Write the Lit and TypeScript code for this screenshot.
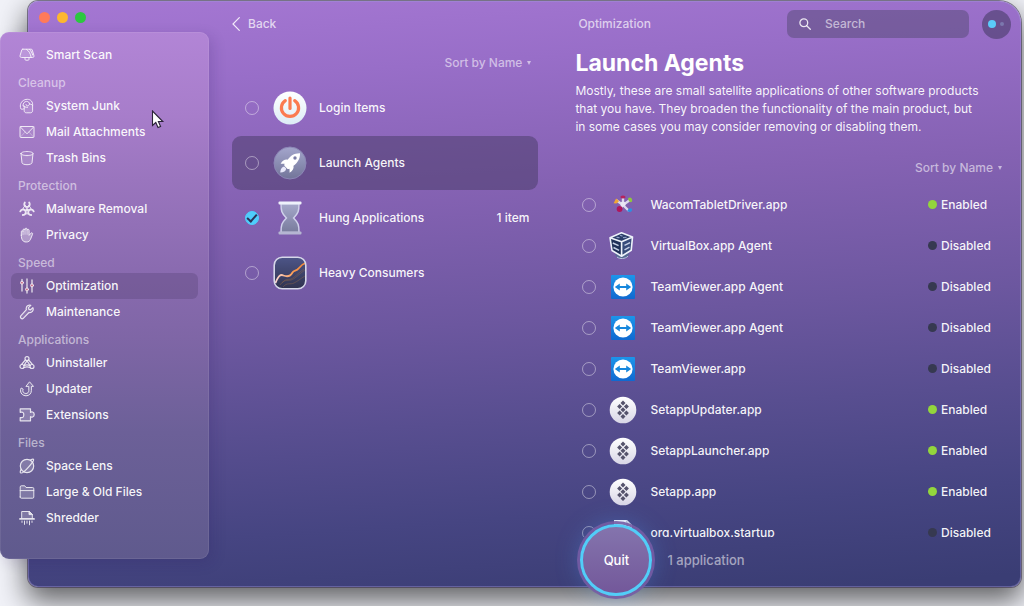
import { LitElement, html, svg, css, nothing, TemplateResult } from "lit";
import { customElement, property, state } from "lit/decorators.js";
import { classMap } from "lit/directives/class-map.js";

type Glyph = TemplateResult;

/* Line glyphs of the navigation, all on a 16x16 grid. */
const navGlyphs: Record<string, Glyph> = {
  scan: svg`<path fill="rgba(255,255,255,.18)" d="M3.800 2.200h8.400c.5 0 .8.2 1 .6l1.700 5.600c.3 1.300-.2 2.100-1.300 2.100H2.400C1.300 10.500.8 9.700 1.100 8.400l1.700-5.600c.2-.4.500-.6 1-.6z"/><path d="M6 10.600v1.700c0 .6.300.9.900.9h2.200c.6 0 .9-.3.900-.9v-1.700M7.500 2.400c2.200 1.400 3.900 3.600 4.600 7.800M10.500 2.400c1.600 1.600 2.600 3.400 3.200 5.600"/>`,
  junk: svg`<path fill="rgba(255,255,255,.14)" d="M5.200 8v4.700c0 1.300.9 2.100 2.200 2.100h4c1.300 0 2.200-.8 2.200-2.100V7.200"/><path d="M13.600 7.400C14.200 4 11.800 1.300 8.400 1.300 4.400 1.300 1.300 4.300 1.300 8c0 1.200.3 2.100.6 2.900.9.600 2.200.4 3.200-.3M4.100 7.800c-.3-2.500 1.300-4.400 3.500-4.400 1.700 0 2.800 1.100 2.800 2.500 0 1.100-.8 1.900-1.900 1.900-.9 0-1.500-.6-1.500-1.300M10.400 5.900c1 .1 2.300.5 3.200 1.400M4.100 7.800c1 1 2.600 1.600 4.400 1.600"/>`,
  mail: svg`<rect x="1" y="2.500" width="14" height="11" rx="1" fill="rgba(255,255,255,.1)"/><path d="M1.400 3l6.600 6.800L14.600 3"/><path d="M1.500 13l4.600-5M14.500 13L9.900 8" opacity=".4"/>`,
  trash: svg`<path fill="rgba(255,255,255,.14)" d="M2 3.600l1 9.200c.1 1 2.200 1.900 5 1.900s4.900-.9 5-1.900l1-9.200"/><path d="M2 3.500c0-1.200 2.600-1.900 6-1.900s6 .7 6 1.900S11.400 5.600 8 5.600 2 4.700 2 3.500z"/>`,
  biohazard: svg`<g stroke-width="1.900"><path d="M5.800 1.600C4.500 3.700 5.700 6 8 6s3.500-2.300 2.200-4.400M1.300 10.300C2.400 8 5.300 7.900 6.500 9.900c1 2-.3 4.100-2.700 4.100M14.700 10.300C13.600 8 10.700 7.900 9.500 9.900c-1 2 .3 4.100 2.700 4.100"/></g><circle cx="8" cy="8.700" r="1.100" fill="currentColor"/><path d="M4.100 7.600c.3-1.400 1.200-2.500 2.400-3.100M11.900 7.600c-.3-1.400-1.200-2.500-2.400-3.100M6.200 12.500c1.200.6 2.400.6 3.600 0"/>`,
  hand: svg`<path fill="rgba(255,255,255,.34)" d="M2.300 8.200V4.700c0-1.300 1.500-1.300 1.700-.2V3c.1-1.400 1.800-1.400 2 0v-.8c.1-1.400 2-1.400 2.100 0v1c.2-1.300 2-1.200 2 .2v5l1.700-2.100c.8-1 2.300-.3 1.700 1l-2 5c-.7 1.800-2 2.700-4.300 2.700-3.300 0-4.900-2.300-4.900-6.800z"/><path d="M4 4.500v3.200M6 3v4.300M8.100 3.200v4.200" stroke-width=".7"/>`,
  sliders: svg`<g stroke-width="1.300"><path d="M3 1.500v1.700M3 6.200V13M8 1v9M8 12.800V15M13 2v4M13 8.800V14"/></g><g fill="#df7184"><circle cx="3" cy="4.700" r="1.500"/><circle cx="8" cy="11.400" r="1.500"/><circle cx="13" cy="7.400" r="1.500"/></g>`,
  wrench: svg`<path fill="rgba(255,255,255,.12)" stroke-width="1.200" d="M13.900 3.600l-2.300 2.200-1.700-.4-.4-1.800 2.300-2.200C9.700.7 7.700 1.800 7.300 3.700c-.2.700-.1 1.400.1 2L2 11.700c-1.600 1.800.8 4.100 2.500 2.400l5.500-5.600c2.700.7 5-1.900 3.900-4.900z"/>`,
  uninstall: svg`<g stroke-width="1.200"><circle cx="8" cy="3.600" r="2"/><circle cx="3" cy="11.500" r="2"/><circle cx="13" cy="11.500" r="2"/><path d="M6.300 5L2.600 9.300M9.700 5l3.700 4.300M8 5.800L4.800 10.500M8 5.800l3.200 4.700M5 10.600c2-.9 4-.9 6 0M4.700 12.800c2.200-1.100 4.400-1.100 6.600 0"/></g>`,
  update: svg`<path fill="rgba(255,255,255,.12)" d="M10.800 1.100l3.700 4.300h-2.100v4.200c0 3.100-2.300 5.200-5.400 5.200-3 0-5.300-2.100-5.500-4.900-.1-1.100.2-2 .7-2.900l2 1.200c-.3.500-.4 1-.4 1.500.1 1.600 1.400 2.800 3.100 2.800 1.800 0 2.900-1.200 2.900-3V5.400H7.300z"/>`,
  extension: svg`<path fill="rgba(255,255,255,.22)" stroke-width="1.200" d="M1.200 1.800h10.300v3.600c.8-1 3.700-.8 3.700 2.100s-2.900 3.100-3.700 2.100v4.200H1.200V10.500c3 .8 3.600-.9 3.600-2.700S4.200 4.500 1.200 5.300z"/>`,
  lens: svg`<circle cx="8" cy="8" r="6.700" fill="rgba(255,255,255,.2)" stroke-width="1.200"/><path stroke-width="1.200" d="M2.200 11.400c-1 1.700-1.200 2.900-.6 3.400 1.100.8 4.600-1.900 7.900-5.700s5.900-7 4.900-7.800c-.5-.4-1.600 0-2.900.8"/>`,
  folder: svg`<path fill="rgba(255,255,255,.2)" d="M1.200 13V3c0-.7.4-1.200 1.100-1.200h3.500l1.200 1.700h6.700c.7 0 1.100.5 1.100 1.200V13c0 .7-.4 1.200-1.100 1.200H2.300c-.7 0-1.100-.5-1.100-1.200z"/><path d="M1.200 6.600h13.600"/>`,
  shredder: svg`<path fill="rgba(255,255,255,.2)" d="M2.700 8.500V1.500h7.500l3.100 2.900v4.100"/><path d="M10 1.600v3h3.200z" fill="currentColor"/><path d="M1 8.900h14" stroke-width="1.800"/><path d="M3 11v1.400M5.500 11v3.400M8 11v2.200M10.500 11v3.800M13 11v1.400"/>`,
};

/* Pictures of the optimization categories, on a 34x34 grid. */
const categoryArt: Record<string, Glyph> = {
  login: svg`<defs><linearGradient id="lg" x2="0" y2="1"><stop stop-color="#fff"/><stop offset="1" stop-color="#dcecf6"/></linearGradient></defs><circle cx="17" cy="17" r="16.500" fill="url(#lg)"/><path d="M12.300 9.600a8.600 8.600 0 1 0 9.400 0" fill="none" stroke="#fb7b50" stroke-width="3.200" stroke-linecap="round"/><path d="M17 7v10.500" stroke="#fb7b50" stroke-width="3.200" stroke-linecap="round"/>`,
  agents: svg`<defs><linearGradient id="ag" x2="0" y2="1"><stop stop-color="#a4a6cc"/><stop offset="1" stop-color="#727599"/></linearGradient></defs><circle cx="17" cy="17" r="16" fill="url(#ag)" stroke="#8c86b6"/><path fill="#fff" d="M27 7.200c-5.700-.2-9.700 2.600-12.400 6.500-2.700-.5-4.900.8-7 4l4 .1c-.3.800-.4 1.400-.2 1.900l3.200 3.200c.6.200 1.200.1 1.900-.2l.1 4c3.200-2 4.400-4.200 3.900-7 3.900-2.800 6.700-6.800 6.500-12.500z"/><circle cx="22" cy="12" r="1.700" fill="#7b7ca6"/><path fill="#e8e8fa" d="M11.500 20.800c-2.700-.2-4 2.300-4.200 5.700 3.300-.1 5.700-1.300 5.900-4z"/>`,
  hourglass: svg`<defs><linearGradient id="hg" x2="0" y2="1"><stop stop-color="#a6a8cb"/><stop offset="1" stop-color="#787b9c"/></linearGradient></defs><path d="M8 2.500h18c0 7.500-.6 9.500-5.400 14.500 4.800 5 5.400 7 5.400 14.500H8c0-7.500.6-9.500 5.400-14.500C8.600 12 8 10 8 2.500z" fill="url(#hg)" stroke="#cfd1ea" stroke-width="1.500"/><rect x="5.500" y=".5" width="23" height="3" rx="1" fill="#eef1fb"/><rect x="5.500" y="30.500" width="23" height="3" rx="1" fill="#b5b6d2"/>`,
  heavy: svg`<defs><linearGradient id="hv" x2="0" y2="1"><stop stop-color="#4d5588"/><stop offset="1" stop-color="#30334f"/></linearGradient><linearGradient id="hl"><stop stop-color="#fbd6d4"/><stop offset=".6" stop-color="#fb9a50"/><stop offset="1" stop-color="#f68632"/></linearGradient></defs><rect x="1.200" y="1.200" width="31.600" height="31.600" rx="8" fill="url(#hv)"/><path d="M7 29c4-6 7-4 11-5s8-6 14-10M10 31c4-5 7-2 11-4s6-4 11-7M9 27c4-5 6-3 9-4s7-6 13-10" fill="none" stroke="#8a6449" stroke-width=".7" opacity=".7"/><path d="M2.500 27c3-7.500 5-9 8-7.500 4 1.500 7 .8 9-3 1.500-2.500 4-1 6-4 2-2.500 4-4.500 7-5.500" fill="none" stroke="url(#hl)" stroke-width="1.800"/><rect x="1.200" y="1.200" width="31.600" height="31.600" rx="8" fill="none" stroke="#d6d7e9" stroke-width="1.600"/>`,
};

/* Application pictures, on a 28x28 grid. */
const appArt: Record<string, Glyph> = {
  wacom: svg`<path d="M14 14L7 9M14 14V6.500M14 14l7-5M14 14l-4 5M14 14l6 6" stroke="#dcd8ec" stroke-width="2.400"/><circle cx="14" cy="13" r="2.600" fill="#e9e6f4"/><path d="M4.600 12.200l2.500-4.600 3 2.400-2.600 2.600z" fill="#f0a634"/><ellipse cx="14" cy="6" rx="2.600" ry="1.500" fill="#b5235f"/><path d="M19 7.500c2-2 4.500-.6 4.200 2.600-.4 2-3.700 1.200-4.200-2.600z" fill="#8fc63d"/><circle cx="10.600" cy="18" r="2.900" fill="#b0165c"/><path d="M18.200 20c.7-2.500 3.600-3.800 4.800-2 .6 2.400-1.800 4-4.800 2z" fill="#2d8fe0"/>`,
  vbox: svg`<path d="M6 21.500c1 6 12 7.500 14.500 0z" fill="#566a93"/><path d="M8 25c3 2.300 8 2 11-.8" stroke="#b7c4dc" fill="none"/><path d="M1 5.700L12.500.8 23.500 5 12.600 9.800z" fill="#2a3c68"/><path d="M1 5.700l11.600 4.100v14.400L3 18.500z" fill="#1f2f58"/><path d="M23.500 5L12.600 9.800v14.400l9.600-5.900z" fill="#374b7a"/><path d="M1 5.700L12.500.8 23.500 5 12.600 9.800zM1 5.700l2 12.800 9.600 5.700 9.600-5.900L23.500 5M12.600 9.800v14.400" fill="none" stroke="#eef2fa" stroke-width="1.600" stroke-linejoin="round"/><path d="M7.500 5.300l3 .3M14 5.600l3.500-.3M11 3.300l2.500.8" stroke="#8f9fc4" stroke-width="1.200"/><path d="M3.800 11l5.800 2.600M4.500 15.500l5.600 2.800M15.500 13.400l5.600-2.800M15.500 17.800l5-2.600" stroke="#c5cfe4" stroke-width="1.500" fill="none"/>`,
  teamviewer: svg`<defs><linearGradient id="tv" x2="0" y2="1"><stop stop-color="#1c95ea"/><stop offset="1" stop-color="#1069d0"/></linearGradient></defs><rect x="2" y="2" width="24" height="24" rx="1" fill="url(#tv)"/><circle cx="14" cy="14" r="9.600" fill="#fff"/><path fill="#1687dd" d="M5.800 14l5-3.400v2.500h6.400v-2.500l5 3.400-5 3.400v-2.500h-6.400v2.500z"/>`,
  setapp: svg`<defs><linearGradient id="sa" x2="0" y2="1"><stop stop-color="#fff"/><stop offset="1" stop-color="#d8d6e6"/></linearGradient></defs><circle cx="14" cy="14" r="13.300" fill="url(#sa)"/><g fill="#55536c"><path d="M14 4.600l2.500 2.500L14 9.600l-2.500-2.500zM10.600 8l2.500 2.500-2.500 2.500-2.500-2.500zM17.400 8l2.500 2.500-2.500 2.500-2.500-2.500z"/><path d="M14 11.300l2.500 2.500-2.500 2.500-2.500-2.500z"/><path d="M10.600 14.600l2.500 2.500-2.500 2.500-2.500-2.500zM17.400 14.600l2.500 2.500-2.500 2.500-2.500-2.500zM14 18l2.500 2.500L14 23l-2.500-2.500z"/></g>`,
  doc: svg`<path d="M5 1h13l5 5v21H5z" fill="#f1f0f8"/><path d="M17 1l6 6h-6z" fill="#c4c2d8"/>`,
};

const navGroups = [
  { title: "", items: [["scan", "Smart Scan"]] },
  { title: "Cleanup", items: [["junk", "System Junk"], ["mail", "Mail Attachments"], ["trash", "Trash Bins"]] },
  { title: "Protection", items: [["biohazard", "Malware Removal"], ["hand", "Privacy"]] },
  { title: "Speed", items: [["sliders", "Optimization"], ["wrench", "Maintenance"]] },
  { title: "Applications", items: [["uninstall", "Uninstaller"], ["update", "Updater"], ["extension", "Extensions"]] },
  { title: "Files", items: [["lens", "Space Lens"], ["folder", "Large & Old Files"], ["shredder", "Shredder"]] },
];

const categories = [
  { art: "login", name: "Login Items", note: "", checked: false },
  { art: "agents", name: "Launch Agents", note: "", checked: false },
  { art: "hourglass", name: "Hung Applications", note: "1 item", checked: true },
  { art: "heavy", name: "Heavy Consumers", note: "", checked: false },
];

const agents = [
  { art: "wacom", name: "WacomTabletDriver.app", enabled: true },
  { art: "vbox", name: "VirtualBox.app Agent", enabled: false },
  { art: "teamviewer", name: "TeamViewer.app Agent", enabled: false },
  { art: "teamviewer", name: "TeamViewer.app Agent", enabled: false },
  { art: "teamviewer", name: "TeamViewer.app", enabled: false },
  { art: "setapp", name: "SetappUpdater.app", enabled: true },
  { art: "setapp", name: "SetappLauncher.app", enabled: true },
  { art: "setapp", name: "Setapp.app", enabled: true },
  { art: "doc", name: "org.virtualbox.startup", enabled: false },
];

const base = css`
  * { box-sizing: border-box; }
  ul { list-style: none; margin: 0; padding: 0; }
  button, input, select { font: inherit; color: inherit; border: 0; background: none; margin: 0; padding: 0; }
  a { color: inherit; text-decoration: none; }
  svg { display: block; flex: none; }
`;

const checks = css`
  .check {
    appearance: none;
    flex: none;
    width: 14px;
    height: 14px;
    border: 1px solid rgba(255, 255, 255, 0.42);
    border-radius: 50%;
    display: grid;
    place-items: center;
  }
  .check:checked { background: #4fcdfb; border-color: #4fcdfb; }
  .check:checked::after {
    content: "";
    width: 8px;
    height: 4px;
    border: solid #2c3157;
    border-width: 0 0 2px 2px;
    transform: translateY(-1px) rotate(-48deg);
  }
`;

@customElement("sort-menu")
class SortMenu extends LitElement {
  @property() label = "";
  static styles = [base, css`
    :host { display: flex; justify-content: flex-end; }
    .sort { display: flex; align-items: center; gap: 4px; color: rgba(255, 255, 255, 0.56); line-height: 18px; }
    select { appearance: none; outline: none; }
    option { color: #222; }
  `];
  render() {
    return html`<div class="sort">
      <select aria-label=${this.label}><option>Sort by Name</option></select>
      <svg width="4" height="4" viewBox="0 0 4 4" aria-hidden="true"><path d="M0 0h4L2 4z" fill="currentColor"/></svg>
    </div>`;
  }
}

@customElement("nav-panel")
class NavPanel extends LitElement {
  @state() private current = "Optimization";
  static styles = [base, css`
    :host {
      display: flex;
      flex-direction: column;
      gap: 5px;
      padding: 10px 11px 28px;
      border-radius: 9px;
      background: linear-gradient(180deg, #b285d6 0%, #a77dca 16%, #9a75be 28%, #8a6bb0 45%, #7f66a6 58%, #6c6098 76%, #5f5a8d 100%);
      box-shadow: inset 0 0 0 1px rgba(255, 255, 255, 0.08), 4px 4px 14px rgba(40, 20, 90, 0.16);
    }
    .title { margin: 0; padding-left: 7px; font-size: 12px; font-weight: 500; line-height: 20px; color: rgba(255, 255, 255, 0.54); }
    .link { display: flex; align-items: center; gap: 11px; height: 26px; padding-left: 8px; border-radius: 6px; }
    .link.on { background: rgba(80, 60, 110, 0.3); }
    .glyph { fill: none; stroke: currentColor; stroke-width: 1; stroke-linejoin: round; stroke-linecap: round; opacity: 0.88; }
  `];
  render() {
    return navGroups.map((g) => html`<section>
      ${g.title ? html`<h2 class="title">${g.title}</h2>` : nothing}
      <ul>${g.items.map(([icon, name]) => html`<li>
        <a href="#" class=${classMap({ link: true, on: name === this.current })}
          @click=${(e: Event) => { e.preventDefault(); this.current = name; }}>
          <svg class="glyph" width="16" height="16" viewBox="0 0 16 16" aria-hidden="true">${navGlyphs[icon]}</svg>
          <span>${name}</span>
        </a></li>`)}</ul>
    </section>`);
  }
}

@customElement("category-list")
class CategoryList extends LitElement {
  @state() private current = "Launch Agents";
  static styles = [base, checks, css`
    :host { display: block; }
    ul { display: flex; flex-direction: column; gap: 1px; }
    .row { display: flex; align-items: center; height: 54px; padding: 0 9px 0 13px; border-radius: 9px; }
    .row.on { background: rgba(72, 60, 104, 0.52); }
    .pick { display: flex; align-items: center; flex: 1; min-width: 0; }
    .art { margin: 0 12px 0 14px; }
  `];
  render() {
    return html`<ul>${categories.map((c) => html`
      <li class=${classMap({ row: true, on: c.name === this.current })} @click=${() => (this.current = c.name)}>
        <label class="pick">
          <input class="check" type="checkbox" .checked=${c.checked} />
          <svg class="art" width="34" height="34" viewBox="0 0 34 34" aria-hidden="true">${categoryArt[c.art]}</svg>
          <span>${c.name}</span>
        </label>
        ${c.note ? html`<span>${c.note}</span>` : nothing}
      </li>`)}</ul>`;
  }
}

@customElement("agent-list")
class AgentList extends LitElement {
  static styles = [base, checks, css`
    :host { display: block; overflow: hidden; }
    .row { display: flex; align-items: center; height: 41px; }
    .pick { display: flex; align-items: center; flex: 1; min-width: 0; padding-left: 7px; }
    .art { margin: 0 13px; }
    .status { display: flex; align-items: center; gap: 4px; width: 83px; }
    .dot { width: 9px; height: 9px; border-radius: 50%; background: #363950; }
    .dot.on { background: #93d63c; }
  `];
  render() {
    return html`<ul>${agents.map((a) => html`<li class="row">
      <label class="pick">
        <input class="check" type="checkbox" />
        <svg class="art" width="28" height="28" viewBox="0 0 28 28" aria-hidden="true">${appArt[a.art]}</svg>
        <span>${a.name}</span>
      </label>
      <span class="status"><i class=${classMap({ dot: true, on: a.enabled })}></i>${a.enabled ? "Enabled" : "Disabled"}</span>
    </li>`)}</ul>`;
  }
}

@customElement("app-root")
class AppRoot extends LitElement {
  static styles = [base, css`
    :host {
      display: grid;
      grid-template-columns: 28px 181px minmax(0, 1fr) 3px;
      grid-template-rows: 1px 31px minmax(0, 1fr) 28px 19px;
      height: 100vh;
      min-height: 606px;
      overflow: hidden;
      position: relative;
      background: #f1f2f8;
      font-family: Inter, "Liberation Sans", sans-serif;
      font-size: 12px;
      font-weight: 500;
      line-height: 18px;
      color: rgba(255, 255, 255, 0.94);
    }
    nav-panel { grid-area: 3 / 1 / 4 / 3; z-index: 1; }
    .window {
      grid-area: 2 / 2 / 5 / 4;
      position: relative;
      display: grid;
      grid-template-columns: 181px minmax(0, 9fr) minmax(0, 11fr);
      border-radius: 10px;
      border-top-right-radius: 22px;
      background: linear-gradient(176deg, #a577d3 0%, #986ec8 14%, #8562b3 33%, #6c579f 54%, #584e90 69%, #464582 84%, #3a3d74 98%);
      box-shadow: 0 0 0 1px rgba(60, 50, 80, 0.6), inset 0 0 0 1px rgba(160, 150, 220, 0.4), 0 12px 28px 2px rgba(0, 0, 0, 0.6);
    }
    .lights { display: flex; gap: 7px; padding: 11px; }
    .light { width: 11px; height: 11px; border-radius: 50%; }
    .close { background: #ff7a59; }
    .min { background: #fdb72f; }
    .max { background: #2cc840; }
    .middle { padding: 9px 36px 0 23px; }
    .back { display: flex; align-items: center; gap: 8px; height: 28px; color: rgba(255, 255, 255, 0.72); }
    .middle sort-menu { padding: 16px 7px 9px 0; }
    .detail { display: flex; flex-direction: column; min-height: 0; padding: 8px 10px 0 1px; }
    .bar { display: flex; align-items: center; gap: 13px; height: 30px; }
    .crumb { flex: 1; padding-left: 3px; color: rgba(255, 255, 255, 0.68); }
    .search { display: flex; align-items: center; gap: 14px; width: 182px; height: 28px; padding: 0 12px; border-radius: 7px; background: rgba(72, 66, 100, 0.42); color: rgba(255, 255, 255, 0.85); }
    .search input { width: 100%; min-width: 0; outline: none; }
    .search input::placeholder { color: rgba(255, 255, 255, 0.58); opacity: 1; }
    .assist { width: 29px; height: 29px; border-radius: 50%; background: rgba(72, 60, 104, 0.6); display: grid; place-items: center; }
    h1 { margin: 8px 0 0; font-size: 23px; line-height: 32px; font-weight: 700; color: #fff; }
    .about { margin: 3px 28px 0 0; font-weight: 400; line-height: 18px; }
    .detail sort-menu { padding: 23px 9px 7px 0; }
    agent-list { flex: 1; min-height: 0; }
    .actions { position: relative; }
    .foot { height: 50px; padding: 14px 0 0 92px; font-size: 13px; color: rgba(255, 255, 255, 0.54); }
    .quit {
      position: absolute;
      left: 5px;
      bottom: -9px;
      width: 72px;
      height: 72px;
      border-radius: 50%;
      border: 3px solid #52cdf8;
      background: linear-gradient(180deg, #8474ad, #73589a);
      box-shadow: 0 0 0 3px rgba(118, 92, 164, 0.9), 0 0 24px rgba(79, 160, 251, 0.35);
      color: #fff;
      font-size: 13px;
    }
    .pointer { position: absolute; left: 151px; top: 110px; z-index: 2; pointer-events: none; }
  `];
  render() {
    return html`
      <main class="window">
        <div class="lights"><i class="light close"></i><i class="light min"></i><i class="light max"></i></div>
        <section class="middle">
          <button class="back">
            <svg width="8" height="14" viewBox="0 0 8 14" fill="none" stroke="#f3eafa" stroke-width="1.200" stroke-linecap="round"><path d="M7.300.700L1 7l6.300 6.300"/></svg>
            Back
          </button>
          <sort-menu label="Sort categories"></sort-menu>
          <category-list></category-list>
        </section>
        <section class="detail">
          <div class="bar">
            <span class="crumb">Optimization</span>
            <label class="search">
              <svg width="12" height="12" viewBox="0 0 12 12" fill="none" stroke="currentColor" stroke-width="1.300" stroke-linecap="round"><circle cx="4.800" cy="4.800" r="3.900"/><path d="M7.700 7.700l3.600 3.600"/></svg>
              <input type="search" placeholder="Search" aria-label="Search" />
            </label>
            <button class="assist" aria-label="Assistant">
              <svg width="18" height="10" viewBox="0 0 18 10"><circle cx="5" cy="5" r="4" fill="#5bcbfa"/><circle cx="15" cy="5" r="2" fill="#7b78ae"/></svg>
            </button>
          </div>
          <h1>Launch Agents</h1>
          <p class="about">Mostly, these are small satellite applications of other software products that you have. They broaden the functionality of the main product, but in some cases you may consider removing or disabling them.</p>
          <sort-menu label="Sort agents"></sort-menu>
          <agent-list></agent-list>
          <div class="actions">
            <button class="quit">Quit</button>
            <div class="foot">1 application</div>
          </div>
        </section>
      </main>
      <nav-panel></nav-panel>
      <svg class="pointer" width="14" height="20" viewBox="0 0 14 20" aria-hidden="true"><path d="M1.500 1v14.500l3.300-3 2.200 5 2.600-1.100-2.200-4.900h4.400z" fill="#fff" stroke="#2a2238" stroke-width="1.100"/></svg>
    `;
  }
}
